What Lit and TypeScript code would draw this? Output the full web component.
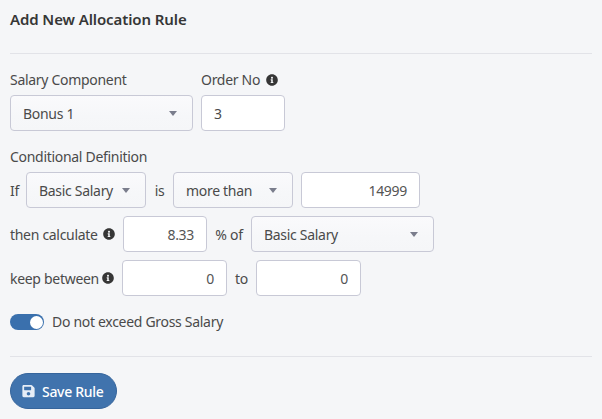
import { LitElement, html, css } from "lit";
import { customElement } from "lit/decorators.js";

const info = html`<svg class="info" viewBox="0 0 512 512"><path fill="currentColor" d="M256 8C119.043 8 8 119.083 8 256c0 136.997 111.043 248 248 248s248-111.003 248-248C504 119.083 392.957 8 256 8zm0 110c23.196 0 42 18.804 42 42s-18.804 42-42 42-42-18.804-42-42 18.804-42 42-42zm56 254c0 6.627-5.373 12-12 12h-88c-6.627 0-12-5.373-12-12v-24c0-6.627 5.373-12 12-12h12v-64h-12c-6.627 0-12-5.373-12-12v-24c0-6.627 5.373-12 12-12h64c6.627 0 12 5.373 12 12v100h12c6.627 0 12 5.373 12 12v24z"/></svg>`;
const save = html`<svg class="save" viewBox="0 0 448 512"><path fill="currentColor" d="M433.941 129.941l-83.882-83.882A48 48 0 0 0 316.118 32H48C21.49 32 0 53.49 0 80v352c0 26.51 21.49 48 48 48h352c26.51 0 48-21.49 48-48V163.882a48 48 0 0 0-14.059-33.941zM224 416c-35.346 0-64-28.654-64-64 0-35.346 28.654-64 64-64s64 28.654 64 64c0 35.346-28.654 64-64 64zm96-304.52V212c0 6.627-5.373 12-12 12H76c-6.627 0-12-5.373-12-12V108c0-6.627 5.373-12 12-12h228.52c3.183 0 6.235 1.264 8.485 3.515l3.48 3.48A11.996 11.996 0 0 1 320 111.48z"/></svg>`;

@customElement("app-root")
export class AppRoot extends LitElement {
  static styles = css`
    :host {
      display: block;
      width: 602px;
      height: 419px;
      box-sizing: border-box;
      overflow: hidden;
      background: #f5f6f8;
      color: #4a4a4a;
      font-family: "Noto Sans", "Open Sans", sans-serif;
      font-size: 14px;
      letter-spacing: -0.3px;
      padding: 0 10px;
    }
    h3 {
      margin: 0;
      padding-top: 9px;
      height: 53px;
      box-sizing: border-box;
      font-size: 15px;
      line-height: 20px;
      font-weight: 600;
      letter-spacing: -0.1px;
      color: #363636;
    }
    hr {
      border: 0;
      height: 1px;
      margin: 0;
      background: #e2e3e8;
    }
    .top {
      display: flex;
      gap: 8px;
      margin-top: 16px;
    }
    .field {
      display: flex;
      flex-direction: column;
      gap: 5px;
    }
    .lbl {
      line-height: 20px;
      display: flex;
      align-items: center;
      white-space: nowrap;
    }
    .box {
      height: 36px;
      box-sizing: border-box;
      border: 1px solid #c8c9d6;
      border-radius: 4px;
      background: #fff;
      display: flex;
      align-items: center;
      white-space: nowrap;
      flex: none;
    }
    .input { padding: 0 12px; }
    .num { justify-content: flex-end; color: #555; }
    .sel {
      background: linear-gradient(#fafafc, #f6f7f9 60%, #f5f6f8);
      padding: 0 15px 0 12px;
      justify-content: space-between;
    }
    .caret {
      width: 0;
      height: 0;
      border-left: 4px solid transparent;
      border-right: 4px solid transparent;
      border-top: 5px solid #7a7d8c;
      flex: none;
    }
    .section {
      line-height: 20px;
      margin-top: 16px;
    }
    .row {
      display: flex;
      align-items: center;
      margin-top: 8px;
      white-space: nowrap;
    }
    .row.first { margin-top: 5px; }
    .gap-if { width: 16px; }
    .gap-is { width: 27px; text-align: center; }
    .gap-of { width: 44px; text-align: center; }
    .gap-to { width: 29px; text-align: center; }
    .w-then { width: 93px; }
    .w-keep { width: 92px; }
    .info {
      width: 12px;
      height: 12px;
      color: #363636;
      flex: none;
    }
    .order-lbl { gap: 6px; }
    .m8 { margin-left: 8px; }
    .toggle-row {
      display: flex;
      align-items: center;
      gap: 8px;
      margin-top: 16px;
      line-height: 20px;
    }
    .toggle {
      width: 34px;
      height: 16px;
      border-radius: 8px;
      background: #3a70ad;
      position: relative;
      flex: none;
    }
    .toggle::after {
      content: "";
      position: absolute;
      right: 1px;
      top: 1.5px;
      width: 13px;
      height: 13px;
      border-radius: 50%;
      background: #fff;
    }
    .rule2 { margin-top: 24px; }
    .save-btn {
      margin-top: 16px;
      width: 107px;
      height: 36px;
      box-sizing: border-box;
      border: 1px solid #36659c;
      border-radius: 18px;
      background: #4073ad;
      color: #fff;
      font: inherit;
      letter-spacing: inherit;
      font-weight: 500;
      display: flex;
      align-items: center;
      gap: 7px;
      padding: 0 0 0 11px;
    }
    .save { width: 13px; height: 14px; color: #e6edf6; flex: none; }
  `;

  render() {
    return html`
      <h3>Add New Allocation Rule</h3>
      <hr />
      <div class="top">
        <div class="field">
          <div class="lbl">Salary Component</div>
          <div class="box sel" style="width:183px">Bonus 1<span class="caret"></span></div>
        </div>
        <div class="field">
          <div class="lbl order-lbl">Order No ${info}</div>
          <div class="box input" style="width:84px">3</div>
        </div>
      </div>
      <div class="section">Conditional Definition</div>
      <div class="row first">
        <span class="gap-if">If</span>
        <div class="box sel" style="width:120px">Basic Salary<span class="caret"></span></div>
        <span class="gap-is">is</span>
        <div class="box sel" style="width:120px">more than<span class="caret"></span></div>
        <div class="box input num m8" style="width:119px">14999</div>
      </div>
      <div class="row">
        <span class="w-then">then calculate</span>${info}
        <div class="box input num m8" style="width:84px">8.33</div>
        <span class="gap-of">% of</span>
        <div class="box sel" style="width:183px">Basic Salary<span class="caret"></span></div>
      </div>
      <div class="row">
        <span class="w-keep">keep between</span>${info}
        <div class="box input num m8" style="width:105px">0</div>
        <span class="gap-to">to</span>
        <div class="box input num" style="width:105px">0</div>
      </div>
      <div class="toggle-row"><span class="toggle"></span>Do not exceed Gross Salary</div>
      <hr class="rule2" />
      <button class="save-btn">${save}Save Rule</button>
    `;
  }
}
